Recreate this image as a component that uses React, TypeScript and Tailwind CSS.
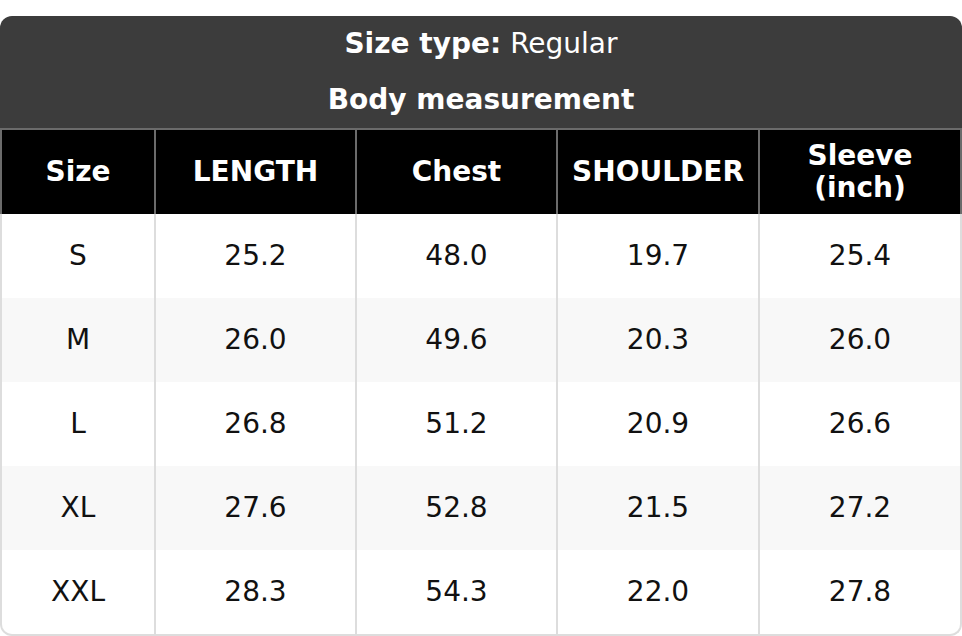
const columns = ["Size", "LENGTH", "Chest", "SHOULDER", "Sleeve (inch)"];

const rows = [
  ["S", "25.2", "48.0", "19.7", "25.4"],
  ["M", "26.0", "49.6", "20.3", "26.0"],
  ["L", "26.8", "51.2", "20.9", "26.6"],
  ["XL", "27.6", "52.8", "21.5", "27.2"],
  ["XXL", "28.3", "54.3", "22.0", "27.8"],
];

const gridCols = "grid grid-cols-[152px_199px_199px_200px_200px] gap-x-[2px]";

export default function App() {
  return (
    <div className="min-h-screen bg-white font-['DejaVu_Sans',sans-serif]">
      <div className="w-[962px] pt-4">
        {/* top title block */}
        <div className="bg-[#3c3c3c] rounded-t-[12px] text-white text-[28px]">
          <div className="h-[56px] flex items-center justify-center">
            <span className="font-bold">Size type:</span>
            <span className="ml-[9px]">Regular</span>
          </div>
          <div className="h-[56px] flex items-center justify-center font-bold">
            Body measurement
          </div>
        </div>

        {/* column headers */}
        <div className={`${gridCols} bg-[#6b6b6b] px-[2px] pt-[2px]`}>
          {columns.map((c) => (
            <div
              key={c}
              className="h-[84px] bg-black text-white font-bold text-[28px] leading-[32px] flex items-center justify-center text-center px-1"
            >
              {c === "Sleeve (inch)" ? (
                <span>
                  Sleeve
                  <br />
                  (inch)
                </span>
              ) : (
                c
              )}
            </div>
          ))}
        </div>

        {/* body */}
        <div className="border-x-2 border-b-2 border-[#dddddd] rounded-b-[12px] overflow-hidden">
          {rows.map((r, i) => (
            <div key={r[0]} className={`${gridCols} bg-[#dddddd]`}>
              {r.map((v, j) => (
                <div
                  key={j}
                  className={`h-[84px] ${
                    i % 2 === 1 ? "bg-[#f8f8f8]" : "bg-white"
                  } flex items-center justify-center text-[28px] text-[#111]`}
                >
                  {v}
                </div>
              ))}
            </div>
          ))}
        </div>
      </div>
    </div>
  );
}
